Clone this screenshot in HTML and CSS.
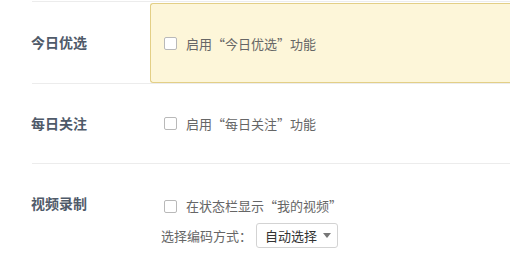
FILE: index.html
```html
<!DOCTYPE html>
<html lang="zh-CN">
<head>
<meta charset="utf-8">
<link rel="stylesheet" href="styles.css">
</head>
<body>
<div class="settings">
  <div class="row row-first">
    <div class="label">今日优选</div>
    <div class="content highlight">
      <label class="check"><span class="box"></span>启用“今日优选”功能</label>
    </div>
  </div>
  <div class="row row-mid">
    <div class="label">每日关注</div>
    <div class="content">
      <label class="check"><span class="box"></span>启用“每日关注”功能</label>
    </div>
  </div>
  <div class="row row-last">
    <div class="label">视频录制</div>
    <div class="content stack">
      <label class="check"><span class="box"></span>在状态栏显示“我的视频”</label>
      <div class="field">
        <span>选择编码方式：</span>
        <span class="select">自动选择<span class="arrow"></span></span>
      </div>
    </div>
  </div>
</div>
</body>
</html>
```
FILE: styles.css
```css
* { box-sizing: border-box; }
html, body {
  margin: 0;
  padding: 0;
  background: #fff;
}
body {
  font-family: "Noto Sans CJK SC", "Noto Sans", sans-serif;
  font-size: 13px;
  color: #666;
  padding-top: 1px;
}
.settings {
  padding-left: 32px;
}
.row {
  display: flex;
  border-top: 1px solid #ececec;
}
.label {
  width: 119px;
  flex: none;
  font-size: 14px;
  font-weight: bold;
  color: #4f5a69;
  line-height: 20px;
  margin-left: -1px;
}
.content {
  flex: 1;
  padding-left: 11px;
  display: flex;
  align-items: center;
}
.check {
  font-variant-east-asian: full-width;
}
.row-first {
  padding-top: 1px;
  height: 82px;
  align-items: center;
}
.row-first .label,
.row-mid .label {
  margin-top: -2px;
}
.highlight {
  height: 80px;
  background: #fdf6d9;
  border: 1px solid #e3cf86;
  border-right: none;
  border-radius: 3px 0 0 3px;
  padding-left: 10px;
  padding-top: 1px;
}
.row-mid {
  height: 80px;
  align-items: center;
}
.row-last {
  padding-top: 29px;
  align-items: flex-start;
}
.stack {
  flex-direction: column;
  align-items: flex-start;
  gap: 7px;
  padding-top: 3px;
}
.check {
  display: flex;
  align-items: center;
  line-height: 20px;
}
.box {
  width: 13px;
  height: 13px;
  margin-left: 3px;
  margin-right: 9px;
  border: 1px solid #b9b9b9;
  border-radius: 2px;
  background: #fff;
}
.field {
  display: flex;
  align-items: center;
}
.select {
  display: inline-flex;
  align-items: center;
  height: 25px;
  width: 82px;
  margin-left: 4px;
  padding-left: 8px;
  border: 1px solid #d3d3d3;
  border-radius: 3px;
  background: #fff;
  color: #333;
}
.arrow {
  margin-left: 6px;
  width: 0;
  height: 0;
  border-left: 4px solid transparent;
  border-right: 4px solid transparent;
  border-top: 5px solid #777;
}
```
